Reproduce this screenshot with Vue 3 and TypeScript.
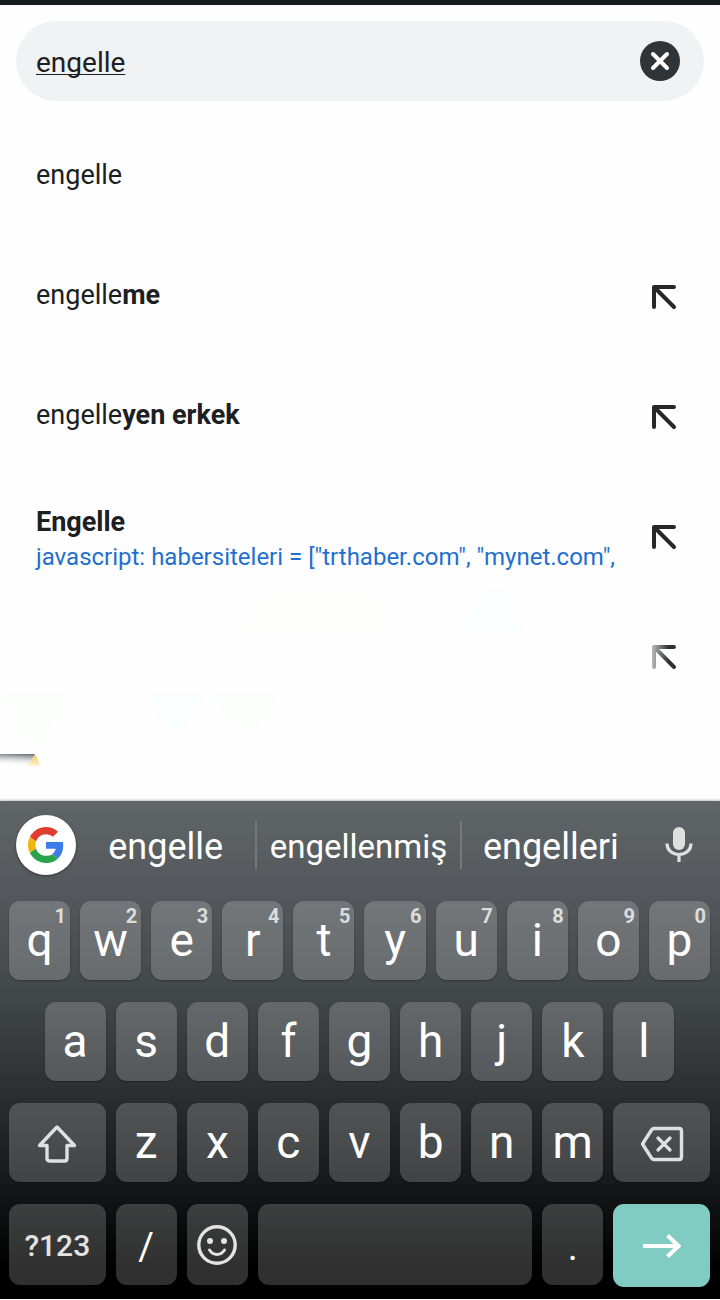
<script setup lang="ts">
import { ref } from 'vue'

interface Suggestion {
  typed: string
  rest: string
  url?: string
  arrow: boolean
  faded?: boolean
}

interface Key {
  label: string
  kind?: 'shift' | 'backspace' | 'emoji' | 'space' | 'enter' | 'symbols' | 'mark'
  name?: string
  hint?: string
  span: number
}

const query = ref('engelle')

const suggestions: Suggestion[] = [
  { typed: 'engelle', rest: '', arrow: false },
  { typed: 'engelle', rest: 'me', arrow: true },
  { typed: 'engelle', rest: 'yen erkek', arrow: true },
  {
    typed: '',
    rest: 'Engelle',
    url: 'javascript: habersiteleri = ["trthaber.com", "mynet.com",',
    arrow: true,
  },
  { typed: '', rest: '', arrow: true, faded: true },
]

const letters = (text: string): Key[] => text.split('').map((label) => ({ label, span: 2 }))

const rows: Key[][] = [
  letters('qwertyuiop').map((key, i) => ({ ...key, hint: String((i + 1) % 10) })),
  letters('asdfghjkl'),
  [
    { label: '', kind: 'shift', name: 'Shift', span: 3 },
    ...letters('zxcvbnm'),
    { label: '', kind: 'backspace', name: 'Backspace', span: 3 },
  ],
  [
    { label: '?123', kind: 'symbols', span: 3 },
    { label: '/', kind: 'mark', span: 2 },
    { label: '', kind: 'emoji', name: 'Emoji', span: 2 },
    { label: '', kind: 'space', name: 'Space', span: 8 },
    { label: '.', kind: 'mark', span: 2 },
    { label: '', kind: 'enter', name: 'Go', span: 3 },
  ],
]
</script>

<template>
  <div class="page">
    <div class="status"></div>

    <form class="search" @submit.prevent>
      <input v-model="query" class="field" type="text" aria-label="Search" spellcheck="false" />
      <button class="clear" type="button" aria-label="Clear" @click="query = ''">
        <svg width="40" height="40" viewBox="0 0 40 40">
          <circle cx="20" cy="20" r="20" fill="#303436" />
          <path d="M13 13 27 27M27 13 13 27" stroke="#fff" stroke-width="4" stroke-linecap="round" />
        </svg>
      </button>
    </form>

    <main class="results">
      <svg class="backdrop" width="720" height="220" viewBox="0 0 720 220" aria-hidden="true">
        <defs>
          <linearGradient id="shade" x1="0.6" y1="0" x2="0.45" y2="1">
            <stop offset="0" stop-color="#70757f" />
            <stop offset="1" stop-color="#fff" stop-opacity="0" />
          </linearGradient>
          <linearGradient id="gold" x1="0" y1="0" x2="0" y2="1">
            <stop offset="0" stop-color="#f0c650" />
            <stop offset="1" stop-color="#fff4d4" />
          </linearGradient>
        </defs>
        <path d="M484 10h24l16 42h-66z" fill="#fbfefe" />
        <path d="M262 22 284 12h86l14 40H248z" fill="#fefefc" />
        <path d="M4 114h64l-34 60z" fill="#fcfefc" />
        <path d="M145 114h62l-34 48z" fill="#fbfefe" />
        <path d="M212 114h66l-20 32h-24z" fill="#fcfefc" />
        <path d="M0 174h35l-6 12H0z" fill="url(#shade)" />
        <path d="M35 174 41 186H28z" fill="url(#gold)" />
      </svg>
      <ul class="list">
        <li v-for="(item, i) in suggestions" :key="i" class="item">
          <a v-if="item.typed || item.rest" class="entry" :class="{ double: item.url }" href="#" @click.prevent>
            <span class="title">{{ item.typed }}<b>{{ item.rest }}</b></span>
            <span v-if="item.url" class="url">{{ item.url }}</span>
          </a>
          <span v-else class="entry"></span>
          <button v-if="item.arrow" class="refine" type="button" aria-label="Use this suggestion">
            <svg width="26" height="26" viewBox="0 0 26 26">
              <defs>
                <linearGradient id="fade" gradientUnits="userSpaceOnUse" x1="1" y1="0" x2="23" y2="0">
                  <stop offset="0" stop-color="#bbb" />
                  <stop offset="0.75" stop-color="#303234" />
                </linearGradient>
              </defs>
              <path
                d="M3 23V3H23M3 3 23 23"
                fill="none"
                :stroke="item.faded ? 'url(#fade)' : '#25292b'"
                stroke-width="4"
                stroke-linecap="round"
                stroke-linejoin="round"
              />
            </svg>
          </button>
        </li>
      </ul>
    </main>

    <section class="keyboard" aria-label="Keyboard">
      <div class="strip">
        <button class="logo" type="button" aria-label="Google">
          <svg width="36" height="36" viewBox="0 0 48 48">
            <path fill="#e13d2e" d="M24 9.500c3.540 0 6.710 1.220 9.210 3.600l6.850-6.850C35.900 2.380 30.470 0 24 0 14.620 0 6.510 5.380 2.560 13.220l7.980 6.190C12.430 13.720 17.740 9.500 24 9.500z" />
            <path fill="#3c7de9" d="M46.980 24.550c0-1.570-.15-3.090-.38-4.550H24v9.020h12.940c-.58 2.960-2.260 5.480-4.780 7.180l7.730 6c4.510-4.180 7.090-10.360 7.090-17.650z" />
            <path fill="#f2b50c" d="M10.530 28.590c-.48-1.450-.76-2.990-.76-4.590s.27-3.140.76-4.590l-7.980-6.190C.92 16.460 0 20.120 0 24c0 3.880.92 7.540 2.560 10.780l7.970-6.190z" />
            <path fill="#2ba24c" d="M24 48c6.480 0 11.930-2.130 15.890-5.810l-7.730-6c-2.150 1.450-4.920 2.300-8.160 2.300-6.260 0-11.570-4.220-13.470-9.910l-7.980 6.190C6.510 42.620 14.620 48 24 48z" />
          </svg>
        </button>
        <button class="word" type="button">engelle</button>
        <button class="word long" type="button">engellenmiş</button>
        <button class="word" type="button">engelleri</button>
        <button class="mic" type="button" aria-label="Voice input">
          <svg width="28" height="36" viewBox="0 0 28 36">
            <rect x="8" y="0" width="12" height="23" rx="6" fill="#dfe0e0" />
            <path d="M2 16.500C2 23 7 27.500 14 27.500S26 23 26 16.500M14 27.500V35" fill="none" stroke="#dfe0e0" stroke-width="3.200" />
          </svg>
        </button>
      </div>

      <div class="rows">
        <div v-for="(row, r) in rows" :key="r" class="row" :class="'row-' + (r + 1)">
          <button
            v-for="(key, k) in row"
            :key="k"
            type="button"
            class="key"
            :class="['span-' + key.span, key.kind]"
            :aria-label="key.name"
          >
            <span v-if="key.hint" class="hint">{{ key.hint }}</span>
            <span v-if="key.label">{{ key.label }}</span>
            <svg v-if="key.kind === 'shift'" width="40" height="40" viewBox="0 0 40 40">
              <path d="M20 3 37.500 21.500H30V34.500Q30 37 27.500 37H12.500Q10 37 10 34.500V21.500H2.500Z" fill="none" stroke="#dfe1e1" stroke-width="3.400" stroke-linejoin="round" />
            </svg>
            <svg v-if="key.kind === 'backspace'" width="44" height="36" viewBox="0 0 44 36">
              <path d="M14 2.500H39Q41.500 2.500 41.500 5V31Q41.500 33.500 39 33.500H14Q12.500 33.500 11.500 32L2.500 18 11.500 4Q12.500 2.500 14 2.500Z" fill="none" stroke="#dfe1e1" stroke-width="3.400" stroke-linejoin="round" />
              <path d="M18 12 30 24M30 12 18 24" stroke="#dfe1e1" stroke-width="3.200" stroke-linecap="round" />
            </svg>
            <svg v-if="key.kind === 'emoji'" width="40" height="40" viewBox="0 0 40 40">
              <circle cx="20" cy="20" r="18.200" fill="none" stroke="#e2e3e2" stroke-width="3.400" />
              <circle cx="13" cy="16" r="3" fill="#e2e3e2" />
              <circle cx="27" cy="16" r="3" fill="#e2e3e2" />
              <path d="M12.500 25Q15.500 29.500 20 29.500T27.500 25" fill="none" stroke="#e2e3e2" stroke-width="3" stroke-linecap="round" />
            </svg>
            <svg v-if="key.kind === 'enter'" width="38" height="26" viewBox="0 0 38 26">
              <path d="M0 13H35M24.500 2.500 35.500 13 24.500 23.500" fill="none" stroke="#fff" stroke-width="4" />
            </svg>
          </button>
        </div>
      </div>
    </section>
  </div>
</template>

<style>
body {
  margin: 0;
  background: #fefefe;
}
</style>

<style scoped>
.page {
  display: flex;
  flex-direction: column;
  min-height: 100vh;
  background: #fefefe;
  color: #1c2022;
  font-family: Roboto, "Liberation Sans", sans-serif;
}

button {
  margin: 0;
  padding: 0;
  border: 0;
  background: none;
  color: inherit;
  font: inherit;
}

svg {
  display: block;
}

.status {
  height: 5px;
  background: #141b1f;
}

.search {
  display: flex;
  align-items: center;
  height: 80px;
  margin: 16px 16px 0;
  padding: 0 24px 0 20px;
  box-sizing: border-box;
  border-radius: 40px;
  background: #f0f2f3;
}

.field {
  flex: 1;
  min-width: 0;
  height: 40px;
  padding: 2px 0 0;
  border: 0;
  outline: 0;
  background: none;
  color: #1c2022;
  font: 28px/36px Roboto, "Liberation Sans", sans-serif;
  text-decoration: underline;
  text-decoration-thickness: 1px;
  text-underline-offset: 2px;
  text-decoration-skip-ink: none;
}

.results {
  position: relative;
  flex: 1;
  padding-top: 14px;
}

.backdrop {
  position: absolute;
  left: 0;
  bottom: 1px;
}

.list {
  position: relative;
  margin: 0;
  padding: 0;
  list-style: none;
}

.item {
  display: flex;
  align-items: center;
  height: 120px;
  padding: 0 43px 0 36px;
}

.entry {
  flex: 1;
  min-width: 0;
  margin-right: 28px;
  color: inherit;
  font-size: 27px;
  line-height: 34px;
  text-decoration: none;
  white-space: nowrap;
}

.entry b {
  font-weight: 700;
}

.double {
  padding-top: 10px;
}

.title,
.url {
  display: block;
}

.url {
  color: #1f6fd0;
  font-size: 24px;
  line-height: 36px;
}

.refine {
  padding-top: 4px;
}

.keyboard {
  margin-bottom: 1px;
  padding-bottom: 14px;
  background: linear-gradient(#606568 0, #53575b 20%, #43484a 38%, #2c3033 58%, #17191a 76%, #000 94%);
  box-shadow: 0 -1px 2px rgba(0, 0, 0, 0.25);
  color: #fff;
}

.strip {
  display: grid;
  grid-template-columns: 60px 179fr 204fr 180fr 78px;
  align-items: center;
  height: 88px;
  padding: 0 2px 12px 16px;
}

.logo {
  display: flex;
  align-items: center;
  justify-content: center;
  width: 60px;
  height: 60px;
  border-radius: 50%;
  background: #fff;
  box-shadow: 0 1px 3px rgba(0, 0, 0, 0.4);
}

.word {
  height: 48px;
  font-size: 36px;
  line-height: 48px;
  padding-top: 2px;
}

.word + .word {
  border-left: 2px solid #75797c;
}

.long {
  font-size: 33px;
}

.mic {
  justify-self: center;
}

.rows {
  display: grid;
  gap: 22px;
  padding: 0 10px 0 9px;
}

.row {
  display: grid;
  grid-template-columns: repeat(20, minmax(0, 1fr));
  column-gap: 10px;
  height: 79px;
}

.row-4 {
  height: 81px;
}

.row-2 .key:first-child {
  grid-column: 2 / span 2;
}

.key {
  position: relative;
  display: flex;
  align-items: center;
  justify-content: center;
  padding-bottom: 2px;
  border-radius: 11px;
  background: rgba(255, 255, 255, 0.19);
  box-shadow: 0 1px 2px rgba(0, 0, 0, 0.3);
  font-size: 46px;
  line-height: 54px;
}

.span-2 {
  grid-column: span 2;
}

.span-3 {
  grid-column: span 3;
}

.span-8 {
  grid-column: span 8;
}

.hint {
  position: absolute;
  top: 4px;
  right: 4px;
  color: #dcdddd;
  font-size: 20px;
  font-weight: 700;
  line-height: 22px;
}

.shift,
.backspace {
  padding-top: 4px;
}

.symbols {
  padding-top: 4px;
  color: #e2e3e2;
  font-size: 30px;
  font-weight: 500;
}

.mark {
  padding-top: 6px;
  font-size: 38px;
}

.emoji {
  padding: 0;
}

.enter {
  margin-bottom: -2px;
  padding: 0;
  background: #80cbc2;
}
</style>
